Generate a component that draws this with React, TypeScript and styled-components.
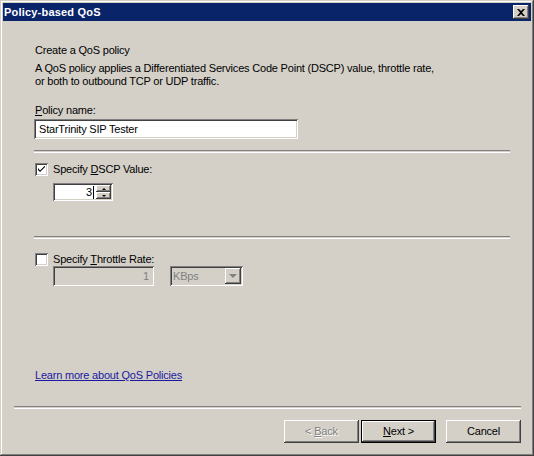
import React from 'react'
import styled, { createGlobalStyle, css } from 'styled-components'

const GlobalStyle = createGlobalStyle`
  html, body {
    margin: 0;
    padding: 0;
    background: #d4d0c8;
  }
  body {
    font-family: 'Liberation Sans', Arial, sans-serif;
    font-size: 11px;
    line-height: 13px;
    letter-spacing: -0.2px;
    color: #000;
  }
`

const raised = css`
  box-shadow: inset -1px -1px #404040, inset 1px 1px #ffffff,
    inset -2px -2px #808080, inset 2px 2px #d4d0c8;
`

const sunken = css`
  box-shadow: inset 1px 1px #808080, inset -1px -1px #ffffff,
    inset 2px 2px #404040, inset -2px -2px #d4d0c8;
`

const Window = styled.div`
  width: 534px;
  height: 456px;
  box-sizing: border-box;
  padding: 3px;
  display: flex;
  flex-direction: column;
  background: #d4d0c8;
  box-shadow: inset -1px -1px #404040, inset 1px 1px #d4d0c8,
    inset -2px -2px #808080, inset 2px 2px #ffffff;
`

const TitleBar = styled.div`
  height: 18px;
  display: flex;
  align-items: center;
  justify-content: space-between;
  padding: 0 2px 0 1px;
  background: #0a246a;
`

const Title = styled.span`
  color: #fff;
  font-weight: bold;
  font-size: 11px;
  letter-spacing: 0.2px;
`

const CloseButton = styled.div`
  width: 16px;
  height: 14px;
  background: #d4d0c8;
  display: flex;
  align-items: center;
  justify-content: center;
  ${raised}
`

const Main = styled.div`
  flex: 1;
  display: flex;
  flex-direction: column;
  padding: 23px 21px 24px 31px;
`

const Heading = styled.div`
  margin-left: 1px;
`

const Description = styled.div`
  margin: 5px 0 0 1px;
`

const FieldLabel = styled.div`
  margin: 16px 0 2px 1px;
`

const TextField = styled.div<{ $width: number; $disabled?: boolean }>`
  width: ${(p) => p.$width}px;
  height: 20px;
  box-sizing: border-box;
  padding: 0 5px;
  display: flex;
  align-items: center;
  justify-content: ${(p) => (p.$disabled ? 'flex-end' : 'flex-start')};
  background: ${(p) => (p.$disabled ? '#d4d0c8' : '#fff')};
  color: ${(p) => (p.$disabled ? '#808080' : '#000')};
  ${sunken}
`

const Separator = styled.div<{ $top: number }>`
  margin-top: ${(p) => p.$top}px;
  height: 1px;
  border-top: 1px solid #808080;
  border-bottom: 1px solid #fff;
`

const CheckRow = styled.label<{ $top: number }>`
  display: flex;
  align-items: center;
  gap: 5px;
  margin-top: ${(p) => p.$top}px;
  margin-left: 1px;
`

const CheckBox = styled.span`
  width: 13px;
  height: 13px;
  box-sizing: border-box;
  background: #fff;
  display: flex;
  align-items: center;
  justify-content: center;
  ${sunken}
`

const Indent = styled.div<{ $top: number }>`
  margin: ${(p) => p.$top}px 0 0 19px;
  display: flex;
  gap: 16px;
`

const Spinner = styled.div`
  display: flex;
  width: 60px;
  height: 18px;
  box-sizing: border-box;
  padding: 2px;
  background: #fff;
  ${sunken}
`

const SpinText = styled.div`
  flex: 1;
  display: flex;
  align-items: center;
  justify-content: flex-end;
  padding-right: 2px;
`

const Caret = styled.span`
  width: 1px;
  height: 13px;
  background: #000;
  margin-left: 1px;
`

const SpinButtons = styled.div`
  width: 15px;
  display: flex;
  flex-direction: column;
`

const SpinButton = styled.div`
  flex: 1;
  background: #d4d0c8;
  display: flex;
  align-items: center;
  justify-content: center;
  ${raised}
`

const Arrow = styled.span<{ $dir: 'up' | 'down'; $disabled?: boolean }>`
  width: 0;
  height: 0;
  border-left: ${(p) => (p.$disabled ? 4 : 2)}px solid transparent;
  border-right: ${(p) => (p.$disabled ? 4 : 2)}px solid transparent;
  ${(p) =>
    p.$dir === 'up'
      ? `border-bottom: 2px solid #000;`
      : `border-top: ${p.$disabled ? 4 : 2}px solid ${p.$disabled ? '#808080' : '#000'};`}
`

const Combo = styled.div`
  width: 73px;
  height: 20px;
  box-sizing: border-box;
  padding: 2px;
  display: flex;
  background: #d4d0c8;
  ${sunken}
`

const ComboText = styled.div`
  flex: 1;
  display: flex;
  align-items: center;
  padding-left: 1px;
  color: #808080;
`

const ComboButton = styled.div`
  width: 16px;
  background: #d4d0c8;
  display: flex;
  align-items: center;
  justify-content: center;
  ${raised}
`

const LearnLink = styled.a`
  margin-top: auto;
  margin-left: 1px;
  align-self: flex-start;
  color: #1a1aa0;
  text-decoration: underline;
  cursor: pointer;
`

const Footer = styled.div`
  padding: 0 10px 10px 11px;
  display: flex;
  flex-direction: column;
`

const ButtonRow = styled.div`
  margin-top: 11px;
  display: flex;
  justify-content: flex-end;
  gap: 2px;
`

const Button = styled.button<{ $default?: boolean; $gap?: number }>`
  width: 75px;
  height: 23px;
  margin-left: ${(p) => p.$gap ?? 0}px;
  padding: 0;
  font: inherit;
  letter-spacing: inherit;
  border: none;
  background: #d4d0c8;
  color: ${(p) => (p.disabled ? '#808080' : '#000')};
  text-shadow: ${(p) => (p.disabled ? '1px 1px #fff' : 'none')};
  ${(p) =>
    p.$default
      ? css`
          box-shadow: inset 0 0 0 1px #000, inset -2px -2px #404040,
            inset 2px 2px #ffffff, inset -3px -3px #808080;
        `
      : raised}
`

export default function App() {
  return (
    <>
      <GlobalStyle />
      <Window>
        <TitleBar>
          <Title>Policy-based QoS</Title>
          <CloseButton>
            <svg width="8" height="7" viewBox="0 0 8 7">
              <path d="M0 0h2l2 2 2-2h2L5 3.5 8 7H6L4 5 2 7H0l3-3.5z" fill="#000" />
            </svg>
          </CloseButton>
        </TitleBar>
        <Main>
          <Heading>Create a QoS policy</Heading>
          <Description>
            A QoS policy applies a Differentiated Services Code Point (DSCP) value, throttle rate,
            <br />
            or both to outbound TCP or UDP traffic.
          </Description>
          <FieldLabel>
            <u>P</u>olicy name:
          </FieldLabel>
          <TextField $width={264}>StarTrinity SIP Tester</TextField>
          <Separator $top={11} />
          <CheckRow $top={10}>
            <CheckBox>
              <svg width="7" height="7" viewBox="0 0 7 7">
                <path d="M0 2v2l2 2 5-5V0H6.5L2 4.5z" fill="#000" />
              </svg>
            </CheckBox>
            <span>
              Specify <u>D</u>SCP Value:
            </span>
          </CheckRow>
          <Indent $top={7}>
            <Spinner>
              <SpinText>
                3<Caret />
              </SpinText>
              <SpinButtons>
                <SpinButton>
                  <Arrow $dir="up" />
                </SpinButton>
                <SpinButton>
                  <Arrow $dir="down" />
                </SpinButton>
              </SpinButtons>
            </Spinner>
          </Indent>
          <Separator $top={35} />
          <CheckRow $top={14}>
            <CheckBox />
            <span>
              Specify <u>T</u>hrottle Rate:
            </span>
          </CheckRow>
          <Indent $top={0}>
            <TextField $width={101} $disabled>
              1
            </TextField>
            <Combo>
              <ComboText>KBps</ComboText>
              <ComboButton>
                <Arrow $dir="down" $disabled />
              </ComboButton>
            </Combo>
          </Indent>
          <LearnLink>Learn more about QoS Policies</LearnLink>
        </Main>
        <Footer>
          <Separator $top={0} />
          <ButtonRow>
            <Button disabled>
              &lt; <u>B</u>ack
            </Button>
            <Button $default>
              <u>N</u>ext &gt;
            </Button>
            <Button $gap={8}>Cancel</Button>
          </ButtonRow>
        </Footer>
      </Window>
    </>
  )
}
